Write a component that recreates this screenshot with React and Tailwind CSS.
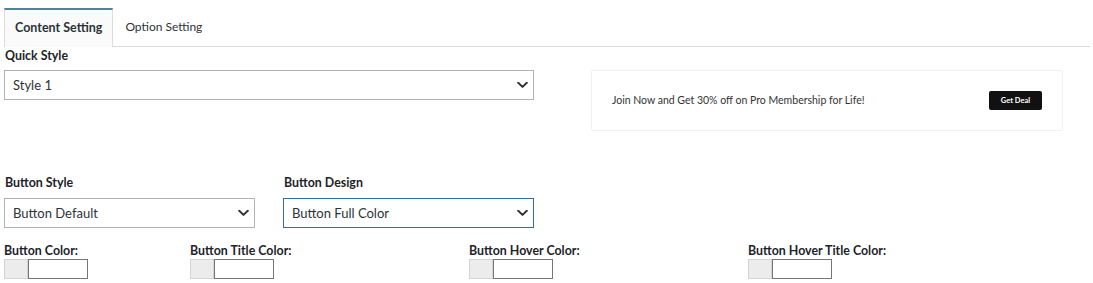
import React from 'react';

const font = { fontFamily: '"Lato", "Noto Sans", sans-serif' };

const Chevron = () => (
  <svg width="11" height="7" viewBox="0 0 11 7" className="absolute right-[5px] top-1/2 -translate-y-1/2">
    <path d="M1.2 1.2 L5.5 5.4 L9.8 1.2" fill="none" stroke="#333" strokeWidth="2" strokeLinecap="round" strokeLinejoin="round" />
  </svg>
);

const SelectBox = ({ value, width, focused }) => (
  <div
    className={`relative h-[30px] flex items-center pl-[8px] pt-[2px] text-[13px] text-[#2c3338] bg-white border ${
      focused ? 'border-[#2f6e9e]' : 'border-[#b3b3b3]'
    } ${width}`}
  >
    {value}
    <Chevron />
  </div>
);

const ColorField = ({ label, width }) => (
  <div className={`flex flex-col ${width}`}>
    <div className="text-[12.4px] font-bold text-[#1d2327] leading-[14px] h-[14px]">{label}</div>
    <div className="flex mt-[1px]">
      <div className="w-[24px] h-[20px] bg-[#ececec] border border-[#d4d4d4]"></div>
      <div className="w-[60px] h-[20px] bg-white border border-[#767676]"></div>
    </div>
  </div>
);

export default function App() {
  return (
    <div className="w-[1093px] h-[283px] bg-white overflow-hidden" style={font}>
      {/* Tabs */}
      <div className="pt-[8px] pl-[4px] pr-[3px]">
        <div className="flex border-b border-[#dcdcde] h-[39px]">
          <div className="h-[39px] px-[10px] flex items-center bg-[#fafafa] border-t-2 border-t-[#4e8592] border-x border-x-[#dcdcde] -mb-px text-[12.5px] font-bold text-[#2c3338]">
            Content Setting
          </div>
          <div className="h-[38px] px-[12px] flex items-center text-[12px] text-[#2c3338]">
            Option Setting
          </div>
        </div>
      </div>

      <div className="pl-[4px]">
        <div className="mt-[2px] pl-[1px] text-[12.4px] font-bold text-[#1d2327] leading-[14px]">Quick Style</div>

        <div className="flex mt-[7px]">
          <SelectBox value="Style 1" width="w-[530px]" />
          <div className="ml-[57px] w-[472px] h-[61px] bg-white border border-[#f0f0f0] rounded-[2px] flex items-center justify-between pl-[20px] pr-[20px]">
            <span className="text-[10.5px] text-[#333] pt-[1px]">Join Now and Get 30% off on Pro Membership for Life!</span>
            <span className="w-[53px] h-[19px] bg-[#111] rounded-[2px] flex items-center justify-center text-[7.5px] font-bold text-white">Get Deal</span>
          </div>
        </div>

        <div className="flex mt-[45px]">
          <div className="flex flex-col w-[279px]">
            <div className="pl-[1px] text-[12.4px] font-bold text-[#1d2327] leading-[14px]">Button Style</div>
            <div className="mt-[8px]">
              <SelectBox value="Button Default" width="w-[251px]" />
            </div>
          </div>
          <div className="flex flex-col">
            <div className="pl-[1px] text-[12.4px] font-bold text-[#1d2327] leading-[14px]">Button Design</div>
            <div className="mt-[8px]">
              <SelectBox value="Button Full Color" width="w-[251px]" focused />
            </div>
          </div>
        </div>

        <div className="flex mt-[16px]">
          <ColorField label="Button Color:" width="w-[186px]" />
          <ColorField label="Button Title Color:" width="w-[279px]" />
          <ColorField label="Button Hover Color:" width="w-[279px]" />
          <ColorField label="Button Hover Title Color:" width="w-[200px]" />
        </div>
      </div>
    </div>
  );
}
